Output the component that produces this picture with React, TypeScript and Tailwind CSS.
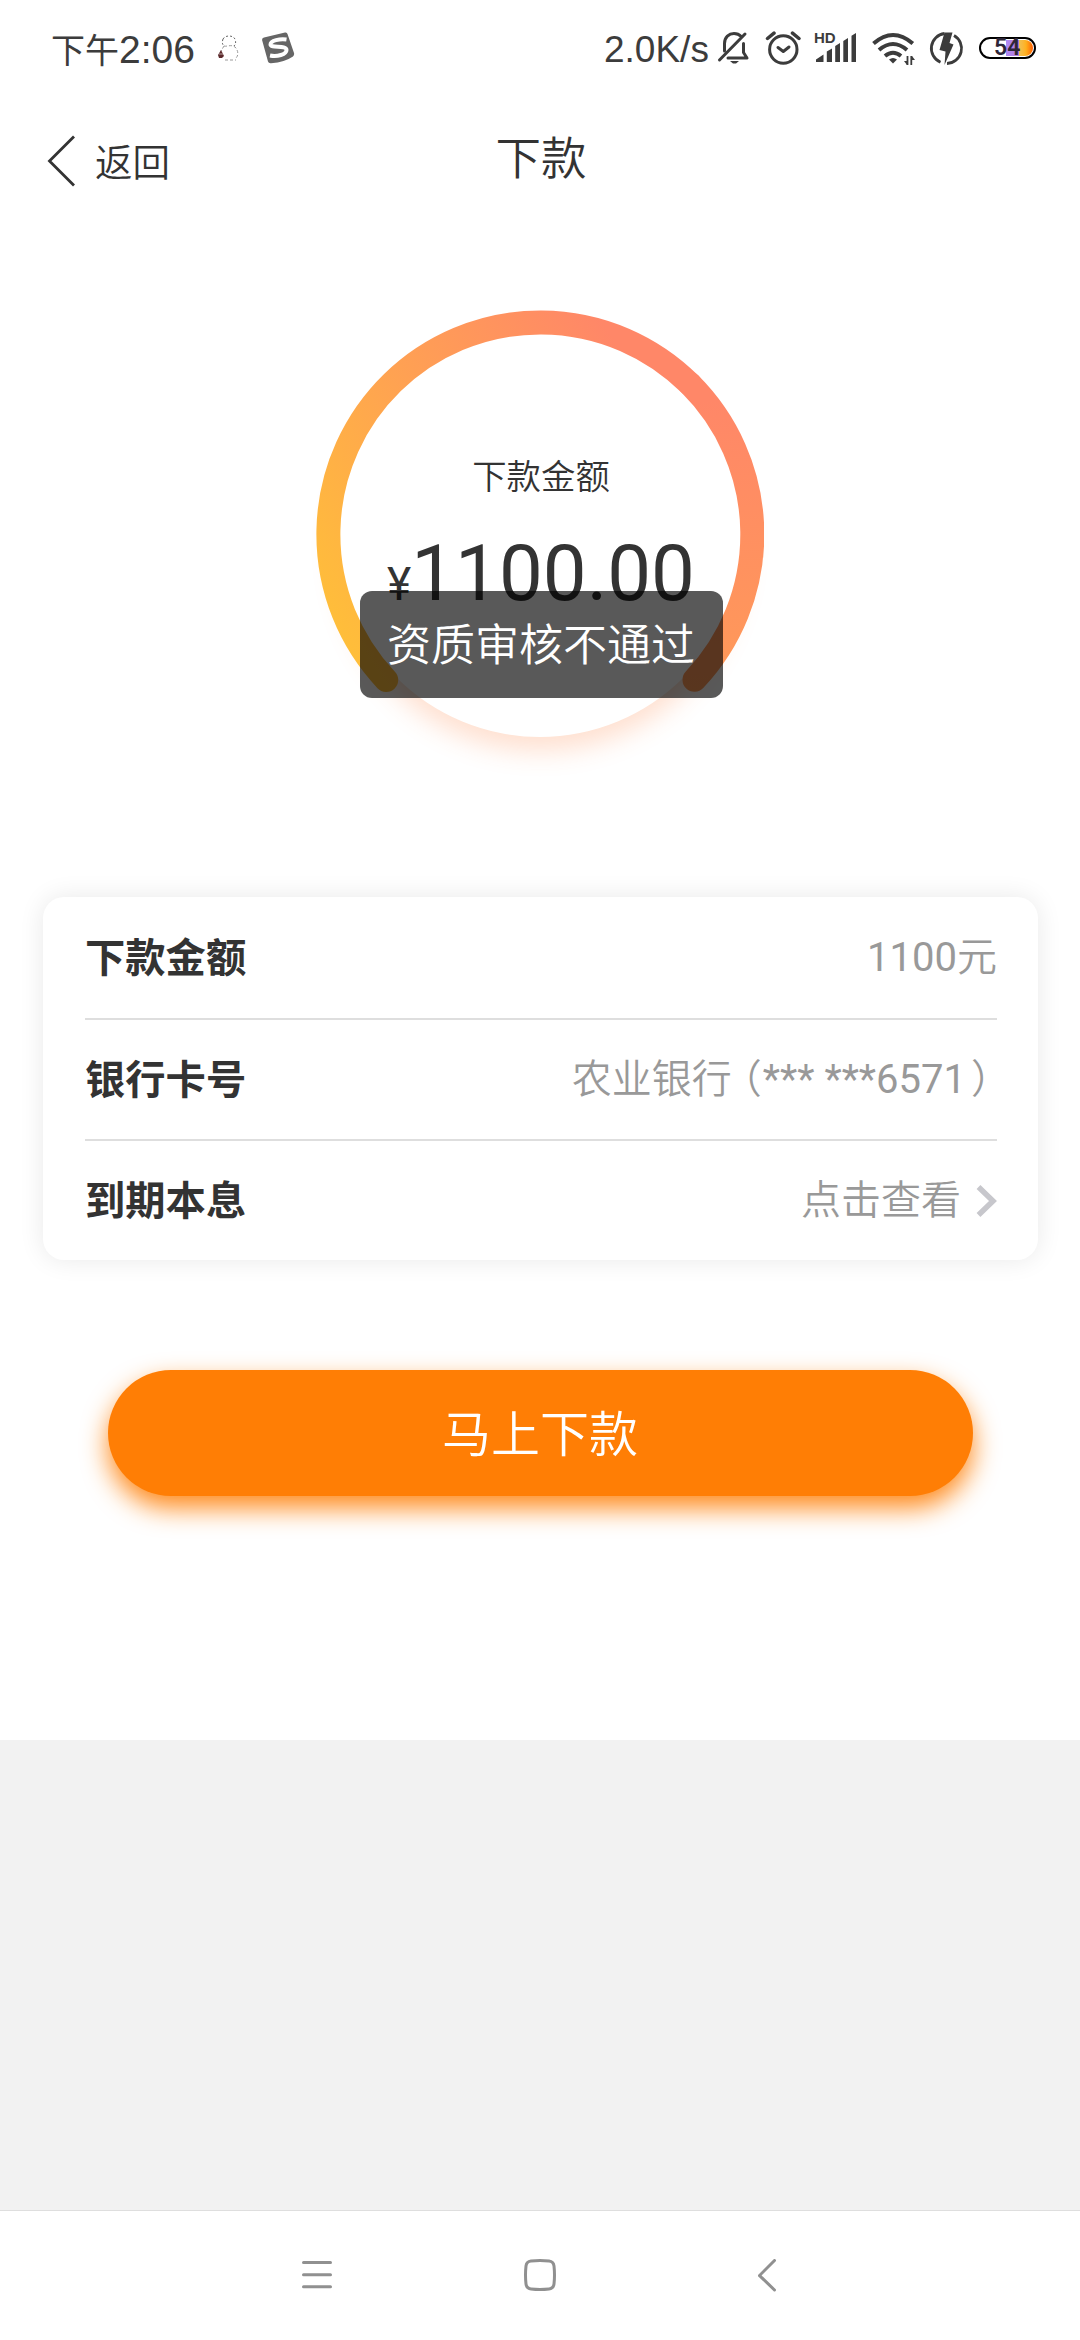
import React from "react";

const StatusBar = () => {
  return (
    <div className="flex h-[98px] items-start text-[#3c3c3c]">
      {/* Clock */}
      <div className="ml-[51px] mt-[21px] flex h-14 w-[146px] items-center whitespace-nowrap">
        <span className="text-[34px] font-normal leading-none">下午</span>
        <span className="font-['Liberation_Sans',sans-serif] text-[39px] leading-none">2:06</span>
      </div>

      {/* Notification icons */}
      <svg className="ml-[20px] mt-[35px]" width="22" height="27" viewBox="217 35 22 27" fill="none">
        <path d="M223 39c2-4 10-4 12 0 1 3 1 5-1 7M223 39c-1 3-1 5 1 7" stroke="#666" strokeWidth="1" strokeDasharray="2 2" />
        <path d="M224 46c3 1 7-2 11 1 3 3 4 8 1 11M224 46l-3 5M225 60h11" stroke="#999" strokeWidth="1" strokeDasharray="3 2" />
        <path d="M221 50l3 6-2 2h-3l-1-3z" fill="#5c2a2c" />
        <path d="M219 54h4" stroke="#b9a3a3" strokeWidth="1" />
      </svg>
      <svg className="ml-[23px] mt-[32px]" width="33" height="33" viewBox="262 32 33 33" fill="none">
        <path d="M264 37.500L285 32.500Q287 32 287.500 34L294 53Q294.500 55 293 56.500Q285 62 271 63.300Q268.500 63.500 268 61.500L262.200 40.500Q261.600 38.200 264 37.500Z" fill="#666" />
        <path d="M286.500 39.500C280 38.500 270.500 40.500 270.500 44.500C270.500 48.500 286.500 45 286.500 50C286.500 54.500 277 57 270 55.500" stroke="#fff" strokeWidth="4" />
      </svg>

      {/* Network speed and system icons */}
      <span className="ml-[309px] mt-[30px] w-[113px] font-['Liberation_Sans',sans-serif] text-[37px] leading-[40px]">
        2.0K/s
      </span>
      <svg className="mt-[31px]" width="33" height="34" viewBox="716 31 33 34" fill="none" stroke="currentColor" strokeWidth="3" strokeLinecap="round" strokeLinejoin="round">
        <path d="M723.500 51V43.500C723.500 37 728 33.500 733 33.500C736 33.500 738.500 34.700 740.300 36.500" />
        <path d="M742.500 43.500V52.500L746 58H727" />
        <path d="M744 34L718.500 60" />
        <path d="M729 61h9l-3 2.500h-3z" fill="currentColor" stroke="none" />
      </svg>
      <svg className="ml-[15px] mt-[30px]" width="36" height="36" viewBox="764 30 36 36" fill="none" stroke="currentColor" strokeWidth="3" strokeLinecap="round" strokeLinejoin="round">
        <circle cx="782.300" cy="49.500" r="13.700" />
        <path d="M777 47.500L782.300 51.500L788 47" />
        <path d="M766.500 38.500L773 33.200M791.500 33.200L798 38.500" strokeWidth="3.500" />
      </svg>
      <div className="relative ml-[14px] h-[70px] w-[42px]">
        <span className="absolute left-[-1px] top-[30px] font-['Liberation_Sans',sans-serif] text-[15px] font-bold leading-[15px]">
          HD
        </span>
        <svg className="absolute left-0 top-[30px]" width="42" height="36" viewBox="814 30 42 36" fill="currentColor">
          <path d="M815 62V59.500L822.500 54.500V62ZM825.800 62V51.500L831 48.500V62ZM834.200 62V46L839 43V62ZM842.300 62V41L847 38V62ZM850.500 62V35.800L855 33V62Z" />
        </svg>
      </div>
      <svg className="ml-[14px] mt-[31px]" width="45" height="36" viewBox="870 31 45 36" fill="none" stroke="currentColor" strokeWidth="4">
        <path d="M872.500 43.500Q892 26.500 911.800 43.500M878 50Q892 38 906 50M884 56Q892 49.500 900 56" />
        <path d="M888 59.500Q892 56.500 896 59.500L892 63.500Z" fill="currentColor" stroke="none" />
        <path d="M906.500 56V65M910.300 56V65" strokeWidth="1.800" />
        <path d="M903 61h3v4zM914 60h-3v-4z" fill="currentColor" stroke="none" />
      </svg>
      <svg className="ml-[13px] mt-[31px]" width="35" height="36" viewBox="928 31 35 36" fill="none" stroke="currentColor" strokeWidth="2.800">
        <path d="M943.500 33.500A15 15 0 0 0 939.500 62.200M953 35.500A15 15 0 0 1 946 63.500" />
        <path d="M943.500 32.500H951.500L948.500 43L952.500 44.500L943.500 65L944.500 51.500L938.500 50Z" fill="currentColor" stroke="none" />
      </svg>
      <div className="relative ml-[15px] mt-[37px] h-[22px] w-[57px] rounded-full border-2 border-black bg-white">
        <div className="absolute left-[25px] top-[1px] h-[16px] w-[14px] bg-gradient-to-r from-[#b08af5] to-[#b47ad8]" />
        <div className="absolute left-[38px] top-[1px] h-[16px] w-[14px] rounded-r-full bg-gradient-to-r from-[#f0c050] via-[#ffb01c] to-[#ff5a00]" />
        <span className="absolute left-[13px] top-[-3px] font-['Roboto',sans-serif] text-[23px] font-semibold leading-[23px] text-[#2e2638]">
          54
        </span>
      </div>
    </div>
  );
};

const Header = () => {
  return (
    <header className="grid h-[122px] grid-cols-3 items-start text-[#333]">
      <div className="flex items-start">
        <svg className="ml-[47px] mt-[37px]" width="30" height="52" viewBox="0 0 30 52" fill="none" stroke="#333" strokeWidth="2.800">
          <path d="M27 1.500L2.500 26L27 50.500" />
        </svg>
        <span className="ml-[18px] mt-[40px] text-[37.500px] leading-[44px]">返回</span>
      </div>
      <h1 className="ml-[2px] mt-[32px] text-center text-[45.500px] font-[350] leading-[50px]">下款</h1>
    </header>
  );
};

const AmountRing = () => {
  return (
    <section className="flex h-[677px] justify-center">
      <div className="relative mt-[90px] h-[448px] w-[448px]">
        <div className="absolute left-[21px] top-[21px] h-[406px] w-[406px] rounded-full bg-white shadow-[0_14px_26px_rgba(255,125,60,0.24)]" />
        <svg className="absolute inset-0" width="448" height="448" viewBox="0 0 448 448" fill="none">
          <defs>
            <linearGradient id="ring" x1="10" y1="330" x2="350" y2="110" gradientUnits="userSpaceOnUse">
              <stop offset="0" stopColor="#ffc038" />
              <stop offset="0.500" stopColor="#ffa252" />
              <stop offset="1" stopColor="#ff8768" />
            </linearGradient>
            <linearGradient id="ringEnd" x1="400" y1="90" x2="390" y2="380" gradientUnits="userSpaceOnUse">
              <stop offset="0" stopColor="#ff8768" />
              <stop offset="1" stopColor="#ff9a58" />
            </linearGradient>
          </defs>
          <path d="M378.500 369.800A212 212 0 0 0 373.900 74.100" stroke="url(#ringEnd)" strokeWidth="24" strokeLinecap="round" />
          <path d="M70.200 369.900A212 212 0 0 1 373.900 74.100" stroke="url(#ring)" strokeWidth="24" strokeLinecap="round" />
        </svg>

        <div className="relative flex flex-col items-center text-[#333]">
          <p className="ml-[2px] mt-[144px] text-[34.400px] leading-[40px]">下款金额</p>
          <p className="ml-[2px] mt-[30px] whitespace-nowrap font-['Roboto',sans-serif] text-[78px] font-normal leading-[100px]">
            <span className="text-[46px]">¥</span>1100.00
          </p>
        </div>

        {/* Toast */}
        <div className="absolute left-[43.500px] top-[281px] flex h-[107px] w-[363px] items-center justify-center rounded-[12px] bg-black/65 text-[44px] leading-none text-white">
          <span className="mb-[5px] whitespace-nowrap">资质审核不通过</span>
        </div>
      </div>
    </section>
  );
};

const DetailRow = ({ label, children }: { label: string; children: React.ReactNode }) => {
  return (
    <div className="flex h-[121px] items-center justify-between border-t-2 border-[#dedede] text-[40px] first:border-t-0">
      <span className="mb-[4px] text-[40.300px] font-bold text-[#333]">{label}</span>
      <div className="flex items-center whitespace-nowrap font-['Roboto','Noto_Sans_CJK_SC',sans-serif] text-[#999]">
        {children}
      </div>
    </div>
  );
};

const DetailCard = () => {
  return (
    <section className="ml-[43px] mr-[42px] rounded-[21px] bg-white pl-[42px] pr-[41px] shadow-[0_0_26px_rgba(0,0,0,0.09)]">
      <DetailRow label="下款金额">
        <span className="font-normal">1100</span>
        <span>元</span>
      </DetailRow>
      <DetailRow label="银行卡号">
        <span>农业银行</span>
        <span className="ml-[10px] mr-px [font-feature-settings:'halt']">（</span>
        <span className="font-normal">*** ***6571</span>
        <span className="ml-[5px] mr-[6px] [font-feature-settings:'halt']">）</span>
      </DetailRow>
      <DetailRow label="到期本息">
        <span>点击查看</span>
        <svg className="ml-[15px]" width="21" height="34" viewBox="0 0 21 34" fill="none" stroke="#c7c7cc" strokeWidth="5.500">
          <path d="M2.500 3L17 17L2.500 31" />
        </svg>
      </DetailRow>
    </section>
  );
};

const NavBar = () => {
  return (
    <nav className="flex h-[130px] items-start border-t border-[#dedede] bg-white">
      <svg className="ml-[302px] mt-[48px]" width="30" height="32" viewBox="0 0 30 32" fill="none" stroke="#909090" strokeWidth="3" strokeLinecap="round">
        <path d="M1.500 3.500H28.500M1.500 15.700H28.500M1.500 27.800H28.500" />
      </svg>
      <svg className="ml-[192px] mt-[48px]" width="32" height="32" viewBox="0 0 32 32" fill="none" stroke="#909090" strokeWidth="3">
        <path d="M7 2Q16 1 25 2Q29.500 2.500 30 7Q31 16 30 25Q29.500 29.500 25 30Q16 31 7 30Q2.500 29.500 2 25Q1 16 2 7Q2.500 2.500 7 2Z" />
      </svg>
      <svg className="ml-[202px] mt-[48px]" width="20" height="34" viewBox="0 0 20 34" fill="none" stroke="#909090" strokeWidth="3" strokeLinecap="round">
        <path d="M16.500 1.500L1.500 16.500L16.500 31" />
      </svg>
    </nav>
  );
};

const App = () => {
  return (
    <div className="flex h-[2340px] w-[1080px] flex-col overflow-hidden bg-[#f2f2f2] font-['Noto_Sans_CJK_SC',sans-serif] font-[350]">
      <main className="h-[1740px] bg-white">
        <StatusBar />
        <Header />
        <AmountRing />
        <DetailCard />
        <div className="mt-[110px] flex justify-center">
          <button className="h-[126px] w-[865px] rounded-full bg-[#ff7e05] pb-[4px] text-[49px] font-[350] text-white shadow-[0_12px_26px_rgba(255,126,5,0.9)]">
            马上下款
          </button>
        </div>
      </main>
      <div className="grow" />
      <NavBar />
    </div>
  );
};

export default App;
